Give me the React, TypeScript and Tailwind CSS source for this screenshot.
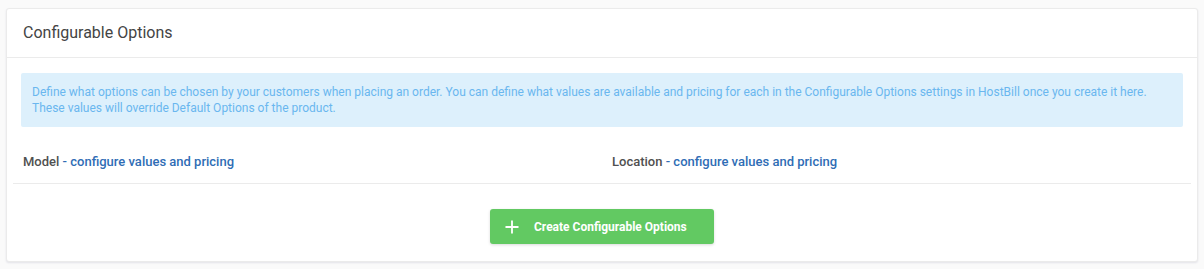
import { Plus } from "lucide-react";
import type { FC } from "react";

const OptionLink: FC<{ name: string }> = ({ name }) => (
	<div className="flex-1 px-[10px] text-[13px] font-medium">
		<span className="text-[#505050]">{name}</span>
		<span className="text-[#2f6db5]"> - </span>
		<a href="#" className="text-[#2f6db5]">
			configure values and pricing
		</a>
	</div>
);

export default function App() {
	return (
		<div className="min-h-[269px] bg-[#fafafa] pt-2 px-[6px] font-['Roboto',sans-serif]">
			<div className="rounded-[3px] border border-[#ebebeb] bg-white shadow-[0_1px_2px_rgba(60,60,110,0.12)]">
				<div className="flex h-[49px] items-center border-b border-[#ebebeb] px-4">
					<h2 className="text-[16px] text-[#444]">Configurable Options</h2>
				</div>
				<div className="px-[6px] pt-[15px] pb-[17px]">
					<div className="mx-2 rounded-[2px] bg-[#ddf0fc] px-[11px] pt-[11px] pb-[11px] text-[12px] leading-4 text-[#6ab7ef]">
						Define what options can be chosen by your customers when placing an order. You can define what values are available and pricing for each in the Configurable Options settings in HostBill once you create it here.
						<br />
						These values will override Default Options of the product.
					</div>
					<div className="mt-[14px] flex h-[43px] items-center border-b border-[#ebebeb]">
						<OptionLink name="Model" />
						<OptionLink name="Location" />
					</div>
					<div className="flex justify-center pt-[25px]">
						<button
							type="button"
							className="flex h-[35px] w-[224px] items-center gap-[12px] rounded-[3px] bg-[#62c962] pl-[12px] text-[12px] font-bold text-white shadow-[0_1px_3px_rgba(0,0,0,0.15)]"
						>
							<Plus className="h-[20px] w-[20px]" strokeWidth={2.2} />
							Create Configurable Options
						</button>
					</div>
				</div>
			</div>
		</div>
	);
}
